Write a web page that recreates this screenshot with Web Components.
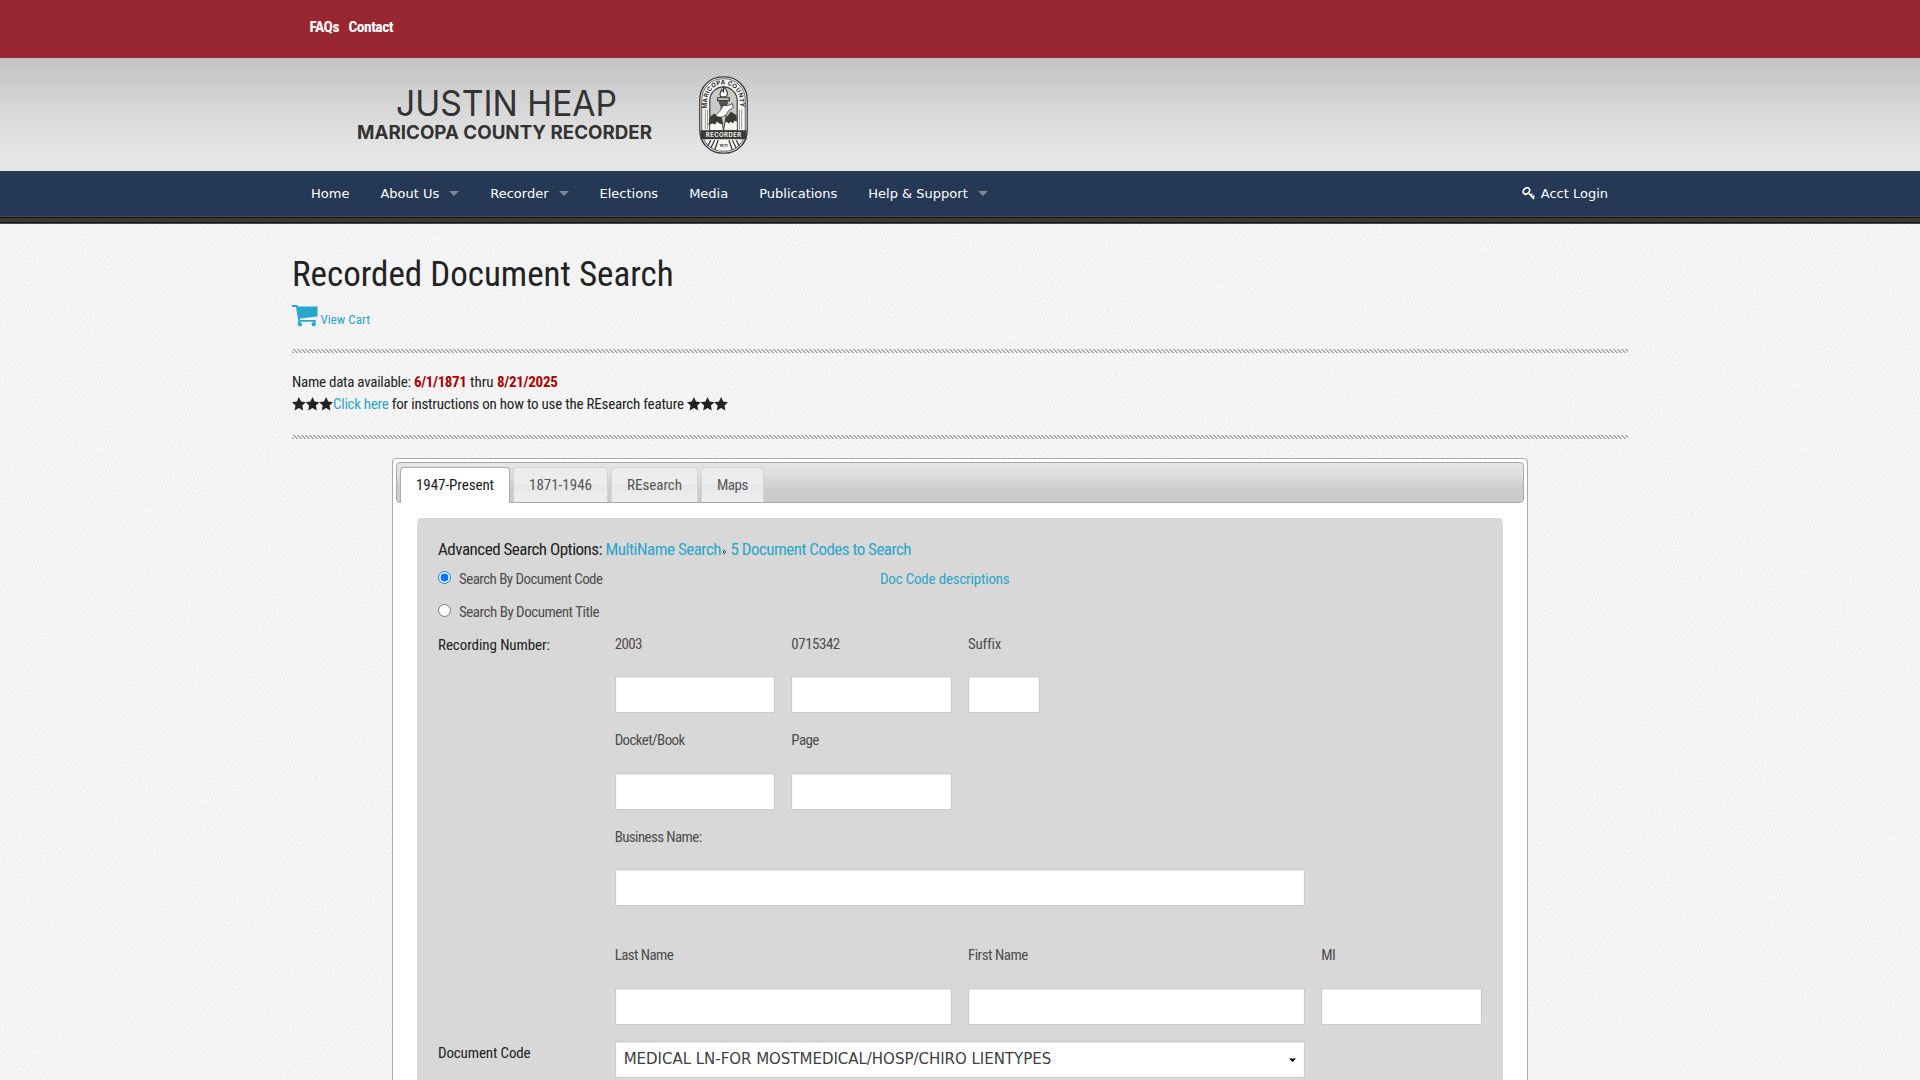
<!DOCTYPE html>
<html lang="en">
<head>
<meta charset="utf-8">
<title>Recorded Document Search</title>
<style>
html,body{margin:0;height:1080px;overflow:hidden}
body{font-family:"Roboto Condensed",Roboto,sans-serif;font-stretch:75%;font-size:15px;color:#222}
</style>
</head>
<body>
<recorder-page></recorder-page>
<script>
function define(name, html, setup) {
  const tpl = document.createElement('template');
  tpl.innerHTML = html;
  customElements.define(name, class extends HTMLElement {
    constructor() {
      super();
      this.attachShadow({mode: 'open'}).appendChild(tpl.content.cloneNode(true));
    }
    connectedCallback() { if (setup) setup(this, this.shadowRoot); }
  });
}

define('top-bar', `<style>
:host{display:flex;gap:9.500px;height:58px;box-sizing:border-box;padding:16px 0 0 309.500px;background:#992732;color:#fff;font-size:15.500px;line-height:22px;font-weight:700}
</style><slot></slot>`);

define('county-seal', `<style>:host{display:block;width:49px;height:78px}svg{display:block}</style>
<svg width="49" height="78" viewBox="0 0 50 79" preserveAspectRatio="none" fill="none" stroke="#3b3a36">
<rect x=".8" y=".8" width="48.4" height="77.4" rx="23" fill="#f6f6f4" stroke-width="1.3"/>
<rect x="2.8" y="2.8" width="44.4" height="73.4" rx="21" stroke-width=".8"/>
<path d="M11 55V25a14 14 0 0 1 28 0v30z" fill="#c9c9c6" stroke-width="1.2"/>
<path d="M6.500 34v20M8.700 34v20M41.300 34v20M43.500 34v20" stroke-width=".7" stroke="#77756f"/>
<path d="M11.500 46h27v9h-27z" fill="#f6f6f4" stroke="none"/>
<path d="M11.500 41l4-3 4 3 3-2 3 4 4-3 3-4 3 2 3 2v6l-2-1-2 3-2-2-2 2-3-2-3 3-4-1-2-2-2 3-3-1-4 2z" fill="#3b3a36" stroke="none"/>
<path d="M25 11c4 4 5 6 3 10h-6c-2-4 1-5 1-7l2 2z" fill="#fff" stroke-width="1.2"/>
<path d="M19 22h12v3H19z" fill="#c9c9c6" stroke-width="1.2"/>
<path d="M20.500 26h9l-1.500 4h-6z" fill="#55534e" stroke-width=".8"/>
<path d="M22.500 30h5v12l-2.500 13-2-12z" fill="#c9c9c6" stroke-width="1"/>
<path d="M25 30q4 1 9-2l1 4-5 3-2 4q-6 5-11 1l4-4q2-3 4-6z" fill="#fff" stroke-width=".8"/>
<path d="M1.500 55h47v9h-47z" fill="#3b3a36" stroke="none"/>
<path d="M3 65l3 5M12 73l4-8M16 75l3.500-10M9 71l3-6M41 71l-3-6M38 73l-4-8M34 75l-3.500-10M47 65l-3 5" stroke-width="1.3"/>
<path id="arc" d="M8.500 34V25a16.500 16.500 0 0 1 33 0v9" stroke="none"/>
<g fill="#302f2c" stroke="none" font-family="Inter,sans-serif" font-weight="700">
<text font-size="6.200" textLength="66" ><textPath href="#arc" startOffset="1" textLength="66">MARICOPA COUNTY</textPath></text>
<text x="7" y="61.800" font-size="6" textLength="36" fill="#f4f4f2">RECORDER</text>
<text x="20.800" y="71.500" font-size="4" textLength="8.500">1871</text>
</g>
</svg>`);

define('site-header', `<style>
:host{display:flex;height:113px;box-sizing:border-box;padding:18px 0 0 357px;align-items:flex-start;
background-image:linear-gradient(135deg,rgba(0,0,0,.075) 12.5%,transparent 12.5% 50%,rgba(0,0,0,.075) 50% 62.5%,transparent 62.5%),linear-gradient(#c6c6c6,#dcdcdc 45%,#eaeaea 85%);background-size:4px 4px,auto}
.name{width:342px;height:80px}
</style>
<svg class="name" width="342" height="80" fill="#333" font-family="Inter,sans-serif">
<text x="39" y="39.500" font-size="35" font-weight="400" textLength="221" lengthAdjust="spacingAndGlyphs">JUSTIN HEAP</text>
<text x="0" y="63" font-size="18.600" font-weight="700" textLength="295" lengthAdjust="spacingAndGlyphs">MARICOPA COUNTY RECORDER</text>
</svg><county-seal></county-seal>`);

define('nav-item', `<style>
:host{display:flex;align-items:center;padding:0 15.510px;color:#fff}
i{display:none;margin-left:10px;border:5px solid transparent;border-top-color:rgba(255,255,255,.4);border-bottom:0}
:host([menu]) i{display:block}
</style><slot></slot><i></i>`);

define('nav-bar', `<style>
:host{display:flex;height:45px;padding:0 296.500px 0 295.490px;background:#253855;font:13px "DejaVu Sans",sans-serif;font-stretch:100%}
.sp{flex:1}
svg{margin-right:6px}
</style>
<nav-item>Home</nav-item><nav-item menu>About Us</nav-item><nav-item menu>Recorder</nav-item><nav-item>Elections</nav-item><nav-item>Media</nav-item><nav-item>Publications</nav-item><nav-item menu>Help &amp; Support</nav-item>
<div class="sp"></div>
<nav-item><svg width="13" height="13" viewBox="0 0 13 13" fill="none" stroke="#fff"><ellipse cx="4.400" cy="4" rx="3.600" ry="2.700" transform="rotate(-40 4.400 4)" stroke-width="1.700"/><path d="M6.500 6l5.500 6M8.500 8.600l1.800-1.700M10.400 10.600l2.100-2" stroke-width="1.700"/></svg>Acct Login</nav-item>`);

define('dark-strip', `<style>
:host{display:block;height:8px;box-sizing:border-box;border-top:1px solid #454545;border-bottom:1px solid #4a4a4a;box-shadow:inset 0 1px #161616,inset 0 -1px #161616;
background:linear-gradient(45deg,#424242 25%,transparent 25% 50%,#424242 50% 75%,transparent 75%) 0 0/3px 3px #2a2a2a}
</style>`);

define('hatch-rule', `<style>
:host{display:block;height:4px;background:linear-gradient(45deg,#aaa 25%,transparent 25% 50%,#aaa 50% 75%,transparent 75%) 0 0/4px 4px}
</style>`);

define('link-text', `<style>:host{color:#2ba6cb}</style><slot></slot>`);

/* Text run whose tracking is set so that it takes up w pixels. */
define('fit-text', `<style>:host{white-space:nowrap}</style><slot></slot>`, (host) => {
  host.style.letterSpacing = '0';
  const range = document.createRange();
  range.selectNodeContents(host);
  const natural = range.getBoundingClientRect().width;
  const n = host.textContent.length;
  if (natural) host.style.letterSpacing = ((host.getAttribute('w') - natural) / n).toFixed(3) + 'px';
});

define('star-row', `<style>:host{display:inline-block;vertical-align:-2px}svg{display:block}</style>
<svg width="41" height="14" fill="#222"><path id="s" d="M6.900 0l2.100 4.500 4.900.7-3.600 3.400.9 4.900-4.300-2.400-4.300 2.400.9-4.900L0 5.200l4.800-.7z"/><use href="#s" x="13.600"/><use href="#s" x="27.200"/></svg>`);

define('view-cart', `<style>
:host{display:flex;height:49px;align-items:flex-start;gap:1.500px;color:#2ba6cb;font-size:13px;line-height:40px}
svg{margin-top:5px}
</style>
<svg width="27" height="22" viewBox="0 0 27 22" fill="#2ba6cb"><path d="M0 0h5l1 1.500h19.500v10L8 13.500l.3 1.500H24v1.800H6.500L4 2H0z"/><path d="M5.800 16.500h2v3h-2zM21.200 16.500h2v3h-2z"/><circle cx="8" cy="19.300" r="2.100"/><circle cx="21.700" cy="19.300" r="2.100"/></svg><span><slot></slot></span>`);

define('page-intro', `<style>
:host{display:block;width:1336px;margin:0 auto;padding-top:26px}
h1{margin:0;font-size:35px;line-height:50px;font-weight:400}
p{margin:0;padding:18px 0 20px;line-height:22px}
b{color:#a00}
</style>
<h1>Recorded Document Search</h1>
<view-cart>View Cart</view-cart>
<hatch-rule></hatch-rule>
<p><fit-text w="122">Name data available: </fit-text><b><fit-text w="52.500">6/1/1871</fit-text></b><fit-text w="30.500"> thru </fit-text><b><fit-text w="60.500">8/21/2025</fit-text></b><br><star-row></star-row><link-text><fit-text w="55.500">Click here</fit-text></link-text><fit-text w="295"> for instructions on how to use the REsearch feature </fit-text><star-row></star-row></p>
<hatch-rule></hatch-rule>`);

define('tab-item', `<style>
:host{display:block;box-sizing:border-box;height:35px;border:1px solid #d3d3d3;border-bottom:0;border-radius:4px 4px 0 0;padding:0 15px;margin-right:3px;line-height:34px;color:#555;background:linear-gradient(#ececec,#ededed 50%,#e6e6e6 50%,#efefef)}
:host([active]){height:36px;border-color:#aaa;background:#fff;color:#212121}
</style><slot></slot>`);

define('tab-set', `<style>
:host{display:block;box-sizing:border-box;width:1136px;height:640px;margin:19px auto 0;border:1px solid #aaa;border-radius:4px;background:#fff;padding:3px}
.bar{display:flex;box-sizing:border-box;height:41px;border:1px solid #aaa;border-radius:4px;padding:4px 0 0 3px;background:linear-gradient(#e4e4e4,#e0e0e0 25%,#cdcdcd 65%,#cacaca)}
</style>
<div class="bar"><tab-item active><fit-text w="78">1947-Present</fit-text></tab-item><tab-item><fit-text w="63">1871-1946</fit-text></tab-item><tab-item><fit-text w="55">REsearch</fit-text></tab-item><tab-item><fit-text w="31">Maps</fit-text></tab-item></div>
<slot></slot>`);

define('radio-row', `<style>
:host{display:flex;height:33px;line-height:34px;color:#4d4d4d}
input{width:13px;height:13px;margin:9px 8px 0 0}
span{width:421px}
</style><input type="radio"><span><slot></slot></span><slot name="aside"></slot>`,
(host, root) => { root.querySelector('input').checked = host.hasAttribute('checked'); });

define('text-field', `<style>
:host{display:block;color:#4d4d4d;grid-column:span var(--cols,1)}
label{display:block;height:48px;line-height:var(--label-line,32px)}
input{display:block;box-sizing:border-box;width:var(--w,100%);height:37px;margin:0;border:1px solid #ccc;border-radius:0;background:#fff;box-shadow:inset 0 1px 2px rgba(0,0,0,.1)}
</style><label><slot></slot></label><input type="text">`);

define('form-row', `<style>
:host{display:grid;grid-template-columns:repeat(6,160.650px);column-gap:16px;align-items:start}
</style><slot></slot>`);

define('select-box', `<style>
:host{display:flex;grid-column:2/span 4;box-sizing:border-box;width:690px;height:37px;align-items:center;justify-content:space-between;padding:0 8px 2px;border:1px solid #ccc;background:#fff;box-shadow:inset 0 1px 2px rgba(0,0,0,.1);font:15px "DejaVu Sans",sans-serif;font-stretch:100%;color:#404040}
svg{margin-top:3px}
</style><span><slot></slot></span><svg width="7" height="4"><path d="M0 .5h7L3.500 4z" fill="#000"/></svg>`);

define('search-panel', `<style>
:host{display:block;box-sizing:border-box;width:1086px;height:600px;margin:15px 0 0 21px;padding:19px 21px;border-radius:5px;background:#d8d8d8}
.adv{height:25px;font-size:17px;line-height:24px;white-space:nowrap}
.adv svg{margin:0 3.500px 0 2px}
.lead{line-height:34px}
</style>
<div class="adv"><fit-text w="167.500">Advanced Search Options: </fit-text><link-text><fit-text w="115.500">MultiName Search</fit-text></link-text><svg width="4" height="6"><path d="M.5.5L3 3 .5 5.500M.5 2v2" fill="none" stroke="#444"/></svg><link-text><fit-text w="180.500">5 Document Codes to Search</fit-text></link-text></div>
<radio-row checked><fit-text w="143.500">Search By Document Code</fit-text><link-text slot="aside"><fit-text w="129.500">Doc Code descriptions</fit-text></link-text></radio-row>
<radio-row><fit-text w="140">Search By Document Title</fit-text></radio-row>
<form-row style="height:97px"><div class="lead"><fit-text w="112">Recording Number:</fit-text></div><text-field><fit-text w="27">2003</fit-text></text-field><text-field><fit-text w="48.500">0715342</fit-text></text-field><text-field style="--w:72px"><fit-text w="31.500">Suffix</fit-text></text-field></form-row>
<form-row style="height:96px;--label-line:30px"><div></div><text-field><fit-text w="70">Docket/Book</fit-text></text-field><text-field><fit-text w="27.500">Page</fit-text></text-field></form-row>
<form-row style="height:119px"><div></div><text-field style="--cols:4"><fit-text w="87">Business Name:</fit-text></text-field></form-row>
<form-row style="height:101px;--label-line:30px"><div></div><text-field style="--cols:2"><fit-text w="58.500">Last Name</fit-text></text-field><text-field style="--cols:2"><fit-text w="60">First Name</fit-text></text-field><text-field><fit-text w="14">MI</fit-text></text-field></form-row>
<form-row><div style="line-height:24px"><fit-text w="92.500">Document Code</fit-text></div><select-box><fit-text w="427.500">MEDICAL LN-FOR MOSTMEDICAL/HOSP/CHIRO LIENTYPES</fit-text></select-box></form-row>`);

define('recorder-page', `<style>
:host{display:block;height:1080px;overflow:hidden;
background:repeating-linear-gradient(145deg,rgba(255,255,255,.5) 0 1px,transparent 1px 3px),repeating-linear-gradient(127deg,rgba(0,0,0,.008) 0 2px,transparent 2px 5px),#f2f2f2}
</style>
<top-bar><fit-text w="29.500">FAQs</fit-text><fit-text w="44.500">Contact</fit-text></top-bar>
<site-header></site-header>
<nav-bar></nav-bar>
<dark-strip></dark-strip>
<page-intro></page-intro>
<tab-set><search-panel></search-panel></tab-set>`);
</script>
</body>
</html>
